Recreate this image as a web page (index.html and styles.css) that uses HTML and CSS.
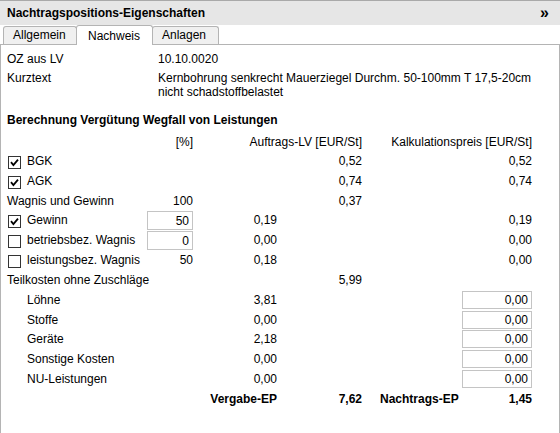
FILE: index.html
```html
<!DOCTYPE html>
<html lang="de">
<head>
<meta charset="utf-8">
<title>Nachtragspositions-Eigenschaften</title>
<link rel="stylesheet" href="styles.css">
</head>
<body>
<div class="panel">
  <div class="header">
    <span class="header-title">Nachtragspositions-Eigenschaften</span>
    <span class="collapse">»</span>
  </div>
  <div class="tabs">
    <div class="tab tab-allgemein">Allgemein</div>
    <div class="tab tab-nachweis active">Nachweis</div>
    <div class="tab tab-anlagen">Anlagen</div>
  </div>
  <div class="content">
    <div class="info">
      <div class="info-label single">OZ aus LV</div>
      <div class="info-value single">10.10.0020</div>
      <div class="info-label">Kurztext</div>
      <div class="info-value">Kernbohrung senkrecht Mauerziegel Durchm. 50-100mm T 17,5-20cm<br>nicht schadstoffbelastet</div>
    </div>
    <h2 class="section-title">Berechnung Vergütung Wegfall von Leistungen</h2>
    <div class="calc">
      <!-- header -->
      <div class="c2">[%]</div>
      <div class="c34">Auftrags-LV [EUR/St]</div>
      <div class="c5">Kalkulationspreis [EUR/St]</div>

      <!-- BGK -->
      <div class="c1 check"><span class="cb"><svg viewBox="0 0 11 11" width="11" height="11"><polyline points="2,5.2 4.4,8 9,2.6" fill="none" stroke="#000" stroke-width="1.8"/></svg></span>BGK</div>
      <div class="c4">0,52</div>
      <div class="c5">0,52</div>

      <!-- AGK -->
      <div class="c1 check"><span class="cb"><svg viewBox="0 0 11 11" width="11" height="11"><polyline points="2,5.2 4.4,8 9,2.6" fill="none" stroke="#000" stroke-width="1.8"/></svg></span>AGK</div>
      <div class="c4">0,74</div>
      <div class="c5">0,74</div>

      <!-- Wagnis und Gewinn -->
      <div class="c1">Wagnis und Gewinn</div>
      <div class="c2">100</div>
      <div class="c4">0,37</div>

      <!-- Gewinn -->
      <div class="c1 check"><span class="cb"><svg viewBox="0 0 11 11" width="11" height="11"><polyline points="2,5.2 4.4,8 9,2.6" fill="none" stroke="#000" stroke-width="1.8"/></svg></span>Gewinn</div>
      <div class="c2"><span class="field field-pct">50</span></div>
      <div class="c3">0,19</div>
      <div class="c5">0,19</div>

      <!-- betriebsbez. Wagnis -->
      <div class="c1 check"><span class="cb"></span>betriebsbez. Wagnis</div>
      <div class="c2"><span class="field field-pct">0</span></div>
      <div class="c3">0,00</div>
      <div class="c5">0,00</div>

      <!-- leistungsbez. Wagnis -->
      <div class="c1 check"><span class="cb"></span>leistungsbez. Wagnis</div>
      <div class="c2">50</div>
      <div class="c3">0,18</div>
      <div class="c5">0,00</div>

      <!-- Teilkosten -->
      <div class="c1">Teilkosten ohne Zuschläge</div>
      <div class="c4">5,99</div>

      <div class="c1 indent">Löhne</div>
      <div class="c3">3,81</div>
      <div class="c5"><span class="field field-price">0,00</span></div>

      <div class="c1 indent">Stoffe</div>
      <div class="c3">0,00</div>
      <div class="c5"><span class="field field-price">0,00</span></div>

      <div class="c1 indent">Geräte</div>
      <div class="c3">2,18</div>
      <div class="c5"><span class="field field-price">0,00</span></div>

      <div class="c1 indent">Sonstige Kosten</div>
      <div class="c3">0,00</div>
      <div class="c5"><span class="field field-price">0,00</span></div>

      <div class="c1 indent">NU-Leistungen</div>
      <div class="c3">0,00</div>
      <div class="c5"><span class="field field-price">0,00</span></div>

      <!-- totals -->
      <div class="c3 strong">Vergabe-EP</div>
      <div class="c4 strong">7,62</div>
      <div class="c5 strong total"><span>Nachtrags-EP</span><span>1,45</span></div>
    </div>
  </div>
</div>
</body>
</html>
```

FILE: styles.css
```css
* { box-sizing: border-box; }

html, body {
  margin: 0;
  padding: 0;
}

body {
  font-family: "Liberation Sans", Arial, sans-serif;
  font-size: 12px;
  color: #000;
  background: #fff;
  width: 560px;
  height: 433px;
  overflow: hidden;
}

.panel {
  width: 560px;
  height: 433px;
}

.header {
  height: 25px;
  border-top: 1px solid #a9a9a9;
  background: #e6e6e6;
  display: flex;
  align-items: center;
  justify-content: space-between;
  padding: 0 11px 0 7px;
}

.header-title {
  font-weight: bold;
  line-height: 24px;
}

.collapse {
  font-weight: bold;
  font-size: 16px;
  line-height: 24px;
}

.tabs {
  height: 19px;
  display: flex;
  align-items: flex-end;
  padding-left: 3px;
}

.tab {
  height: 18px;
  border: 1px solid #b4b4b4;
  border-bottom: none;
  border-radius: 3px 3px 0 0;
  background: #f0f0f0;
  line-height: 17px;
  padding-left: 9px;
  white-space: nowrap;
}

.tab + .tab {
  margin-left: -1px;
}

.tab-allgemein { width: 74px; }
.tab-nachweis { width: 77px; }
.tab-anlagen { width: 67px; }

.tab.active {
  height: 20px;
  margin-bottom: -1px;
  background: #fff;
  position: relative;
  z-index: 1;
  padding-left: 11px;
  line-height: 20px;
}

.content {
  border: 1px solid #b4b4b4;
  border-bottom: 0;
  height: 389px;
  padding: 4px 27px 0 6px;
}

.info {
  display: grid;
  grid-template-columns: 151px 1fr;
  row-gap: 2px;
}

.info-label,
.info-value {
  line-height: 14px;
}

.info-label.single,
.info-value.single {
  line-height: 20px;
}

.section-title {
  margin: 11px 0 0;
  font-size: 12px;
  font-weight: bold;
  line-height: 20px;
}

.calc {
  margin-top: 3px;
  display: grid;
  grid-template-columns: 133px 53px 84px 85px 170px;
  grid-template-rows: 18px 20px 20px 19px 20px 20px 20px 20px 20px 19px 20px 20px 20px 20px;
  align-items: center;
  line-height: 16px;
  white-space: nowrap;
}

.c1 { grid-column: 1; }

.c2, .c3, .c4, .c5, .c34 {
  display: flex;
  justify-content: flex-end;
  align-items: center;
}

.c2 { grid-column: 2; }
.c3 { grid-column: 3; }
.c4 { grid-column: 4; }
.c5 { grid-column: 5; }
.c34 { grid-column: 3 / 5; }

.check {
  display: flex;
  align-items: center;
  gap: 6px;
  padding-left: 1px;
}

.cb {
  width: 13px;
  height: 13px;
  border: 1px solid #333;
  background: #fff;
  flex: none;
  margin-top: 2px;
  display: flex;
}

.cb svg {
  display: block;
}

.indent {
  padding-left: 20px;
}

.field {
  display: block;
  height: 19px;
  border: 1px solid #c4c4c4;
  background: #fff;
  text-align: right;
  padding-right: 3px;
  line-height: 18px;
}

.field-pct { width: 46px; }
.field-price { width: 70px; height: 18px; line-height: 17px; }

.strong {
  font-weight: bold;
}

.total {
  justify-content: space-between;
  padding-left: 18px;
}
```
